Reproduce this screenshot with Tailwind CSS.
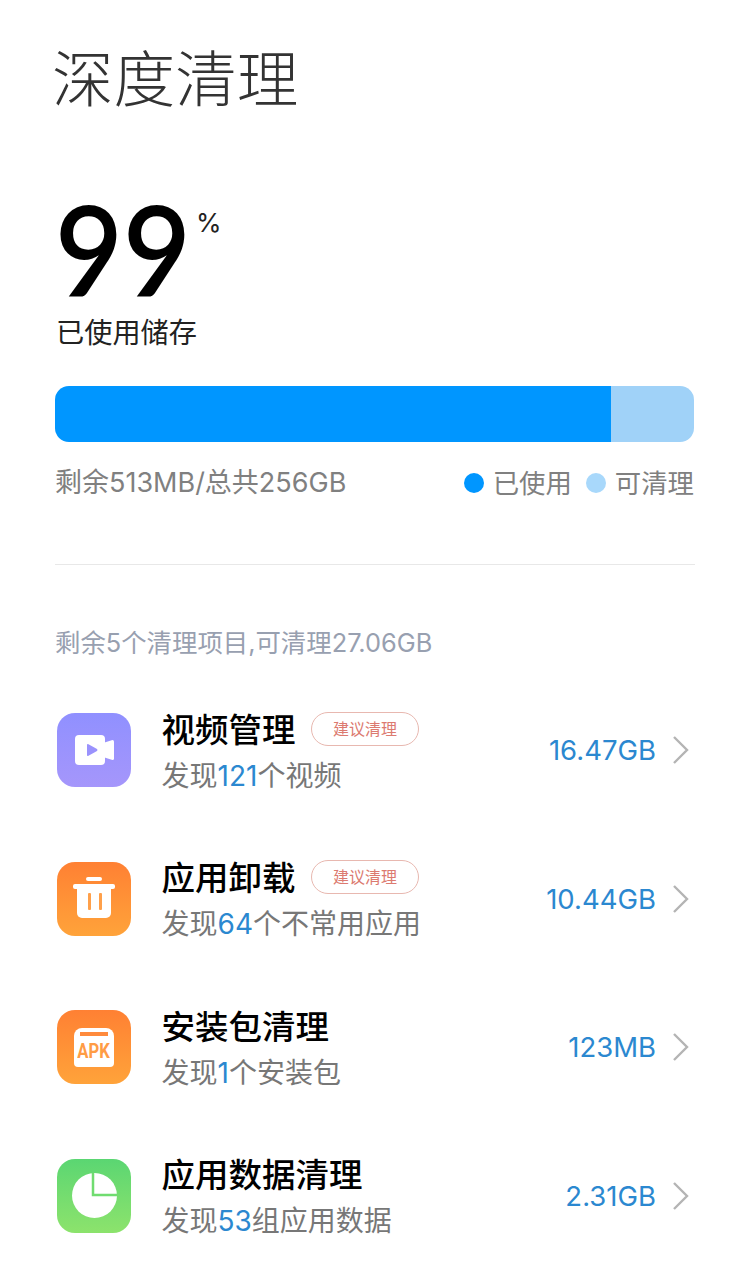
<!DOCTYPE html>
<html lang="zh-CN">
  <head>
    <meta charset="UTF-8" />
    <title>深度清理</title>
    <script src="https://cdn.jsdelivr.net/npm/@tailwindcss/browser@4"></script>
  </head>
  <body class="bg-white font-['Inter','Noto_Sans_CJK_SC',sans-serif]">
    <div class="w-[750px] h-[1280px] overflow-hidden px-[55px]">
      <h1 class="pt-[42px] h-[130px] text-[61.6px] leading-[76px] font-light text-[#333] -ml-[3px]">深度清理</h1>

      <!-- usage -->
      <div class="mt-[56px] flex items-start h-[126px]">
        <span class="text-[126px] leading-[104px] pt-[11px] font-semibold text-black font-['Lato','Inter',sans-serif] scale-x-[0.93] origin-left w-[136px]">99</span>
        <span class="mt-[23px] ml-[5px] text-[26px] leading-[28px] text-[#222]">%</span>
      </div>
      <p class="mt-[3px] ml-[1px] text-[28.2px] leading-[36px] text-[#222]">已使用储存</p>

      <div class="mt-[35px] flex h-[56px] w-[639px] rounded-[14px] overflow-hidden">
        <div class="w-[556px] bg-[#0096ff]"></div>
        <div class="flex-1 bg-[#a0d2f8]"></div>
      </div>
      <div class="mt-[23px] flex items-center justify-between w-[639px] text-[27px] leading-[36px] text-[#808080]">
        <span>剩余513MB/总共256GB</span>
        <div class="flex items-center text-[26.4px]">
          <i class="w-[20px] h-[20px] rounded-full bg-[#0096ff]"></i>
          <span class="ml-[9px]">已使用</span>
          <i class="ml-[14px] w-[20px] h-[20px] rounded-full bg-[#a8d8fb]"></i>
          <span class="ml-[9px]">可清理</span>
        </div>
      </div>

      <div class="mt-[63px] h-px w-[640px] bg-[#e8e8e8]"></div>

      <p class="mt-[61px] text-[25.4px] leading-[34px] text-[#98a0b0]">剩余5个清理项目,可清理27.06GB</p>

      <div class="mt-[53px] flex flex-col gap-[74.6px] w-[640px]">
        <!-- video -->
        <div class="flex items-center h-[74px]">
          <div class="w-[74px] h-[74px] ml-[2px] rounded-[18px] bg-gradient-to-b from-[#9090ff] to-[#a596fb] flex items-center justify-center shrink-0">
            <svg width="39" height="30" viewBox="0 0 39 30">
              <rect x="0" y="0" width="30" height="30" rx="4" fill="#fff" />
              <path d="M28 8 L37.5 5 Q39 5 39 6.5 V23.5 Q39 25 37.5 25 L28 22 Z" fill="#fff" />
              <path d="M12 10 Q12 8.5 13.5 9.3 L22 14 Q23 15 22 16 L13.5 20.7 Q12 21.5 12 20 Z" fill="#9a92fd" />
            </svg>
          </div>
          <div class="ml-[30.5px] flex-1 pt-[3px]">
            <div class="flex items-center h-[44px]">
              <span class="text-[33.5px] leading-[44px] font-medium text-black">视频管理</span>
              <span class="ml-[15.5px] -mt-[2px] w-[108px] h-[34px] rounded-full border border-[#e8b8b0] text-[#dc7a70] text-[16px] leading-[32px] text-center">建议清理</span>
            </div>
            <p class="mt-[4px] text-[28px] leading-[40px] text-[#777]">发现<span class="text-[#2b88d0]">121</span>个视频</p>
          </div>
          <span class="text-[27.5px] text-[#2b88d0] leading-[40px]">16.47GB</span>
          <svg class="ml-[16px] mr-[5px]" width="18" height="28" viewBox="0 0 18 28" fill="none"><path d="M2 1 L15 14 L2 27" stroke="#b4b4b4" stroke-width="2.4" /></svg>
        </div>

        <!-- uninstall -->
        <div class="flex items-center h-[74px]">
          <div class="w-[74px] h-[74px] ml-[2px] rounded-[18px] bg-gradient-to-b from-[#ff8033] to-[#ffa33a] flex items-center justify-center shrink-0">
            <svg class="mb-[3px]" width="42" height="41" viewBox="0 0 42 41">
              <rect x="13" y="0" width="16" height="4" rx="2" fill="#fff" />
              <rect x="0" y="7" width="42" height="5" rx="2" fill="#fff" />
              <path d="M4 10 H38 V36 a5 5 0 0 1 -5 5 H9 a5 5 0 0 1 -5 -5 Z" fill="#fff" />
              <rect x="15" y="16" width="3" height="17" rx="1" fill="#ffa04a" />
              <rect x="26" y="16" width="3" height="17" rx="1" fill="#ffa04a" />
            </svg>
          </div>
          <div class="ml-[30.5px] flex-1 pt-[3px]">
            <div class="flex items-center h-[44px]">
              <span class="text-[33.5px] leading-[44px] font-medium text-black">应用卸载</span>
              <span class="ml-[15.5px] -mt-[2px] w-[108px] h-[34px] rounded-full border border-[#e8b8b0] text-[#dc7a70] text-[16px] leading-[32px] text-center">建议清理</span>
            </div>
            <p class="mt-[4px] text-[28px] leading-[40px] text-[#777]">发现<span class="text-[#2b88d0]">64</span>个不常用应用</p>
          </div>
          <span class="text-[27.5px] text-[#2b88d0] leading-[40px]">10.44GB</span>
          <svg class="ml-[16px] mr-[5px]" width="18" height="28" viewBox="0 0 18 28" fill="none"><path d="M2 1 L15 14 L2 27" stroke="#b4b4b4" stroke-width="2.4" /></svg>
        </div>

        <!-- apk -->
        <div class="flex items-center h-[74px]">
          <div class="w-[74px] h-[74px] ml-[2px] rounded-[18px] bg-gradient-to-b from-[#ff8033] to-[#ffa33a] flex items-center justify-center shrink-0">
            <div class="w-[40px] h-[39px] bg-white rounded-t-[8px] rounded-b-[4px] flex flex-col items-center">
              <i class="mt-[4px] w-[28px] h-[4px] bg-[#ff8a3c]"></i>
              <span class="mt-[6px] text-[20px] leading-[19px] font-bold font-['Roboto',sans-serif] text-[#ff9c45] scale-x-[0.83]">APK</span>
            </div>
          </div>
          <div class="ml-[30.5px] flex-1 pt-[3px]">
            <div class="flex items-center h-[44px]">
              <span class="text-[33.5px] leading-[44px] font-medium text-black">安装包清理</span>
            </div>
            <p class="mt-[4px] text-[28px] leading-[40px] text-[#777]">发现<span class="text-[#2b88d0]">1</span>个安装包</p>
          </div>
          <span class="text-[27.5px] text-[#2b88d0] leading-[40px]">123MB</span>
          <svg class="ml-[16px] mr-[5px]" width="18" height="28" viewBox="0 0 18 28" fill="none"><path d="M2 1 L15 14 L2 27" stroke="#b4b4b4" stroke-width="2.4" /></svg>
        </div>

        <!-- app data -->
        <div class="flex items-center h-[74px]">
          <div class="w-[74px] h-[74px] ml-[2px] rounded-[18px] bg-gradient-to-b from-[#5ad672] to-[#8ce36c] flex items-center justify-center shrink-0">
            <svg width="45" height="45" viewBox="0 0 45 45">
              <circle cx="22.5" cy="22.5" r="22.5" fill="#fff" />
              <path d="M21 0 V22 H45" fill="none" stroke="#70dc70" stroke-width="2.5" />
            </svg>
          </div>
          <div class="ml-[30.5px] flex-1 pt-[3px]">
            <div class="flex items-center h-[44px]">
              <span class="text-[33.5px] leading-[44px] font-medium text-black">应用数据清理</span>
            </div>
            <p class="mt-[4px] text-[28px] leading-[40px] text-[#777]">发现<span class="text-[#2b88d0]">53</span>组应用数据</p>
          </div>
          <span class="text-[27.5px] text-[#2b88d0] leading-[40px]">2.31GB</span>
          <svg class="ml-[16px] mr-[5px]" width="18" height="28" viewBox="0 0 18 28" fill="none"><path d="M2 1 L15 14 L2 27" stroke="#b4b4b4" stroke-width="2.4" /></svg>
        </div>
      </div>
    </div>
  </body>
</html>
